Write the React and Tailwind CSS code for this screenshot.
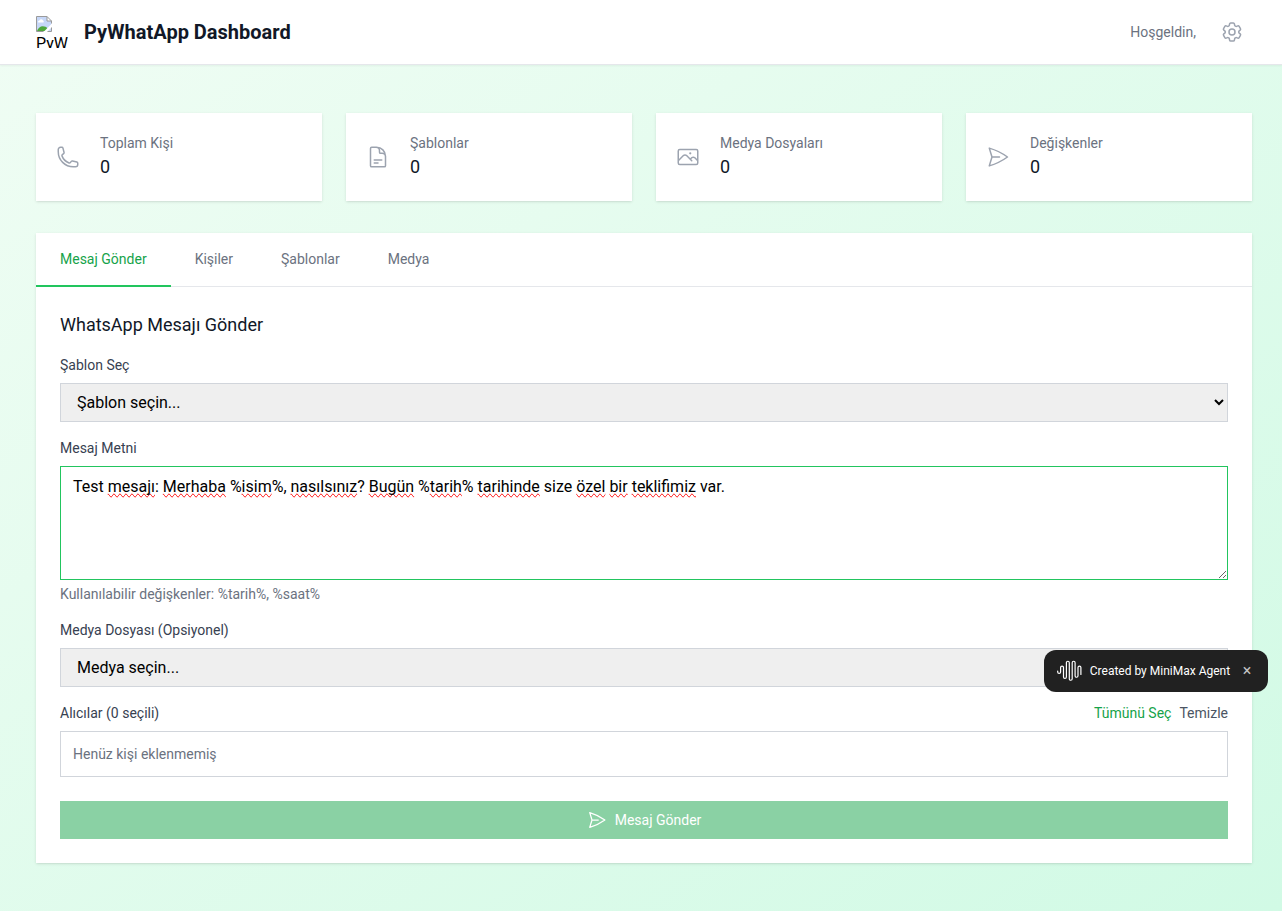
import React from "react";
import {
  HiOutlinePhone,
  HiOutlineDocumentText,
  HiOutlinePhoto,
  HiOutlinePaperAirplane,
  HiOutlineCog6Tooth,
} from "react-icons/hi2";

const stats = [
  { label: "Toplam Kişi", value: 0, Icon: HiOutlinePhone },
  { label: "Şablonlar", value: 0, Icon: HiOutlineDocumentText },
  { label: "Medya Dosyaları", value: 0, Icon: HiOutlinePhoto },
  { label: "Değişkenler", value: 0, Icon: HiOutlinePaperAirplane },
];

const tabs = ["Mesaj Gönder", "Kişiler", "Şablonlar", "Medya"];

function MissingImage() {
  return (
    <svg width="16" height="16" viewBox="0 0 16 16" className="block shrink-0">
      <path d="M0.5 0.5H11L15.5 5V15.5H0.5Z" fill="#c6d7f8" />
      <path d="M2 6.2a1.6 1.6 0 0 1 1.4-1.8 2 2 0 0 1 3.6.2A1.2 1.2 0 0 1 7.4 6.6H2.6Z" fill="#fff" />
      <path d="M1 15c1-3 3.6-4.8 5.6-4.8 2.200 0 4 .8 5 2.200V15Z" fill="#4fa83d" />
      <path d="M7.500 16 16 7.500V11L11 16Z" fill="#fff" />
      <path d="M11 0.500V5H15.500Z" fill="#fff" />
      <path d="M7.500 15.500H0.500V0.500H11L15.500 5V7.500M11 0.500V5H15.500M15.500 11.500V15.500H11.500" fill="none" stroke="#9a9a9a" />
    </svg>
  );
}

function WaveLogo() {
  return (
    <svg width="26" height="22" viewBox="0 0 26 22" fill="none" stroke="#fff" strokeWidth="1.2" strokeLinecap="round">
      <path d="M1.700 11v1a1.450 1.450 0 0 0 2.900 0V7.500a1.450 1.450 0 0 1 2.900 0V17a1.450 1.450 0 0 0 2.900 0V2.700a1.450 1.450 0 0 1 2.900 0V18.800a1.450 1.450 0 0 0 2.900 0V2.700a1.450 1.450 0 0 1 2.900 0V15.800a1.450 1.450 0 0 0 2.900 0V7.500a1.450 1.450 0 0 1 2.900 0V14.500" />
    </svg>
  );
}

function Typo({ children }) {
  return <span className="[text-decoration-line:spelling-error]">{children}</span>;
}

export default function App() {
  return (
    <div className="min-h-[911px] w-full overflow-hidden bg-linear-to-br from-[#f0fdf4] to-[#d1fae5] font-['Roboto',sans-serif] text-black">
      <header className="h-[65px] border-b border-[#e5e7eb] bg-white shadow-xs">
        <div className="ml-9 flex h-16 w-[1216px] items-center justify-between">
          <div className="flex items-center">
            <div className="h-8 w-8 overflow-hidden whitespace-nowrap text-base leading-6">
              <MissingImage />
              <span className="block">PyW</span>
            </div>
            <h1 className="ml-4 text-xl font-bold text-[#111827]">PyWhatApp Dashboard</h1>
          </div>
          <div className="flex items-center gap-4">
            <span className="text-sm text-[#6b7280]">Hoşgeldin,</span>
            <button className="p-2 text-[#9ca3af]">
              <HiOutlineCog6Tooth className="size-6" />
            </button>
          </div>
        </div>
      </header>

      <main className="ml-9 w-[1216px] py-12">
        <div className="grid grid-cols-4 gap-6">
          {stats.map(({ label, value, Icon }) => (
            <div key={label} className="flex h-[88px] items-center bg-white px-5 shadow-sm">
              <Icon className="size-6 text-[#9ca3af]" />
              <div className="ml-5">
                <div className="text-sm leading-5 text-[#6b7280]">{label}</div>
                <div className="text-lg leading-7 text-[#111827]">{value}</div>
              </div>
            </div>
          ))}
        </div>

        <section className="mt-8 bg-white shadow-sm">
          <nav className="flex h-[54px] border-b border-[#e5e7eb]">
            {tabs.map((tab, i) => (
              <button
                key={tab}
                className={
                  i === 0
                    ? "-mb-px h-[54px] border-b-2 border-[#22c55e] px-6 text-sm text-[#16a34a]"
                    : "-mb-px h-[54px] border-b-2 border-transparent px-6 text-sm text-[#6b7280]"
                }
              >
                {tab}
              </button>
            ))}
          </nav>

          <div className="p-6">
            <h3 className="text-lg leading-7 text-[#111827]">WhatsApp Mesajı Gönder</h3>

            <div className="mt-4">
              <label className="mb-2 block text-sm text-[#374151]">Şablon Seç</label>
              <select className="block h-[39px] w-full border border-[#d1d5db] bg-[#efefef] px-3 text-base text-black">
                <option>Şablon seçin...</option>
              </select>
            </div>

            <div className="mt-4">
              <label className="mb-2 block text-sm text-[#374151]">Mesaj Metni</label>
              <div
                role="textbox"
                className="h-[114px] w-full resize overflow-auto border border-[#22c55e] px-3 py-2 text-base leading-6"
              >
                Test <Typo>mesajı</Typo>: <Typo>Merhaba</Typo> %<Typo>isim</Typo>%, <Typo>nasılsınız</Typo>?{" "}
                <Typo>Bugün</Typo> %<Typo>tarih</Typo>% <Typo>tarihinde</Typo> size <Typo>özel</Typo>{" "}
                <Typo>bir</Typo> <Typo>teklifimiz</Typo> var.
              </div>
              <p className="mt-1 text-sm text-[#6b7280]">Kullanılabilir değişkenler: %tarih%, %saat%</p>
            </div>

            <div className="mt-4">
              <label className="mb-2 block text-sm text-[#374151]">Medya Dosyası (Opsiyonel)</label>
              <select className="block h-[39px] w-full border border-[#d1d5db] bg-[#efefef] px-3 text-base text-black">
                <option>Medya seçin...</option>
              </select>
            </div>

            <div className="mt-4">
              <div className="mb-2 flex items-center justify-between text-sm">
                <span className="text-[#374151]">Alıcılar (0 seçili)</span>
                <div className="flex gap-2">
                  <button className="text-[#16a34a]">Tümünü Seç</button>
                  <button className="text-[#4b5563]">Temizle</button>
                </div>
              </div>
              <div className="border border-[#d1d5db] p-3 text-sm text-[#6b7280]">Henüz kişi eklenmemiş</div>
            </div>

            <button className="mt-6 flex h-[38px] w-full items-center justify-center bg-[#8ad1a4] text-sm text-white">
              <HiOutlinePaperAirplane className="mr-2 size-5" />
              Mesaj Gönder
            </button>
          </div>
        </section>
      </main>

      <div className="fixed top-[650px] right-[14px] flex h-[42px] w-[224px] items-center rounded-xl bg-[#212121] pl-3 text-xs text-white">
        <WaveLogo />
        <span className="ml-[7.75px] whitespace-nowrap">Created by MiniMax Agent</span>
        <button className="ml-[12.500px] text-base leading-none text-[#c4c4c4]">×</button>
      </div>
    </div>
  );
}
